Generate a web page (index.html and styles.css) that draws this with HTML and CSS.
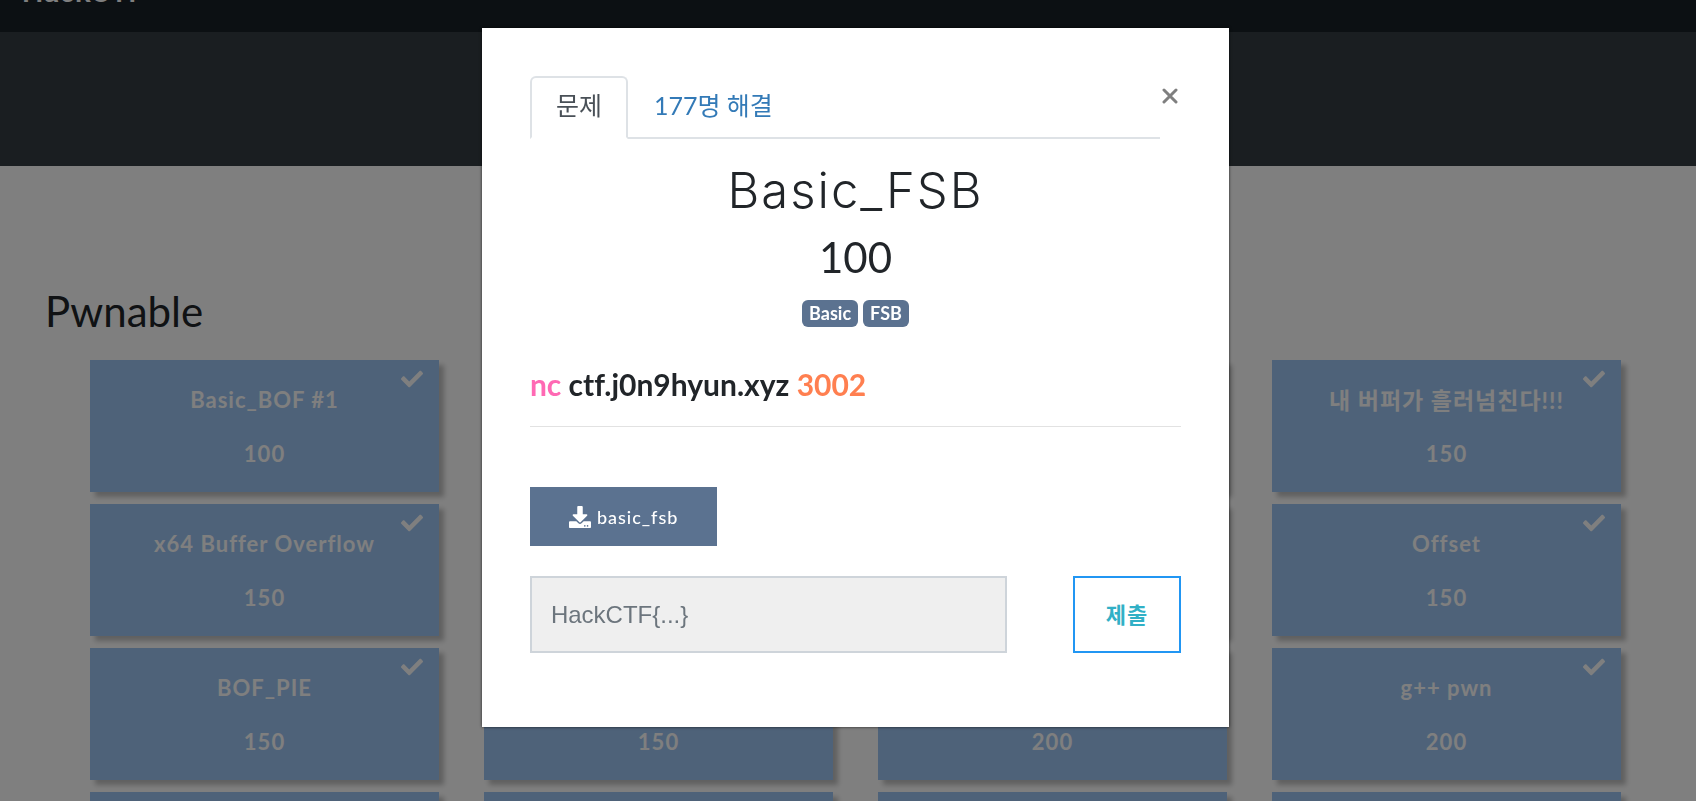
FILE: index.html
```html
<!DOCTYPE html>
<html lang="ko">
<head>
<meta charset="utf-8">
<title>HackCTF</title>
<link rel="stylesheet" href="styles.css">
</head>
<body>
<svg class="defs" aria-hidden="true">
  <symbol id="check" viewBox="0 0 512 512"><path fill="currentColor" d="M173.898 439.404l-166.400-166.400c-9.997-9.997-9.997-26.206 0-36.204l36.203-36.204c9.997-9.998 26.207-9.998 36.204 0L192 312.690 432.095 72.596c9.997-9.997 26.207-9.997 36.204 0l36.203 36.204c9.997 9.997 9.997 26.206 0 36.204l-294.400 294.401c-9.998 9.997-26.207 9.997-36.204-.001z"/></symbol>
  <symbol id="download" viewBox="0 0 512 512"><path fill="currentColor" d="M216 0h80c13.300 0 24 10.700 24 24v168h87.700c17.800 0 26.700 21.500 14.100 34.100L269.700 378.300c-7.500 7.500-19.800 7.500-27.300 0L90.100 226.100c-12.600-12.600-3.700-34.100 14.100-34.100H192V24c0-13.300 10.700-24 24-24zm296 376v112c0 13.300-10.700 24-24 24H24c-13.300 0-24-10.700-24-24V376c0-13.300 10.700-24 24-24h146.700l49 49c20.100 20.100 52.500 20.100 72.600 0l49-49H488c13.300 0 24 10.700 24 24zm-124 88c0-11-9-20-20-20s-20 9-20 20 9 20 20 20 20-9 20-20zm64 0c0-11-9-20-20-20s-20 9-20 20 9 20 20 20 20-9 20-20z"/></symbol>
</svg>
<div class="page">
  <nav class="navbar"><a class="brand" href="#">HackCTF</a></nav>
  <header class="hero"></header>
  <main class="board">
    <h3 class="category">Pwnable</h3>
    <div class="grid">
      <button class="card"><svg class="tick"><use href="#check"/></svg><span>Basic_BOF #1</span><span>100</span></button>
      <button class="card"></button>
      <button class="card"></button>
      <button class="card"><svg class="tick"><use href="#check"/></svg><span class="hangul">내 버퍼가 흘러넘친다!!!</span><span>150</span></button>
      <button class="card"><svg class="tick"><use href="#check"/></svg><span>x64 Buffer Overflow</span><span>150</span></button>
      <button class="card"></button>
      <button class="card"></button>
      <button class="card"><svg class="tick"><use href="#check"/></svg><span>Offset</span><span>150</span></button>
      <button class="card"><svg class="tick"><use href="#check"/></svg><span>BOF_PIE</span><span>150</span></button>
      <button class="card"><span class="name"></span><span>150</span></button>
      <button class="card"><span class="name"></span><span>200</span></button>
      <button class="card"><svg class="tick"><use href="#check"/></svg><span>g++ pwn</span><span>200</span></button>
      <button class="card"></button>
      <button class="card"></button>
      <button class="card"></button>
      <button class="card"></button>
    </div>
  </main>
</div>
<div class="backdrop">
  <section class="modal" role="dialog" aria-labelledby="title">
    <div class="top">
      <div class="tabs">
        <a class="tab active" href="#">문제</a>
        <a class="tab" href="#">177명 해결</a>
      </div>
      <button class="close" aria-label="닫기"><svg viewBox="0 0 16 16"><path d="M2 2l12 12M14 2L2 14" stroke="currentColor" stroke-width="3" stroke-linecap="round"/></svg></button>
    </div>
    <h3 class="title" id="title">Basic_FSB</h3>
    <h4 class="score">100</h4>
    <div class="tags"><span class="tag">Basic</span><span class="tag">FSB</span></div>
    <p class="server"><span class="cmd">nc</span> ctf.j0n9hyun.xyz <span class="port">3002</span></p>
    <a class="file" href="#"><svg><use href="#download"/></svg>basic_fsb</a>
    <form class="answer">
      <input class="flag" type="text" placeholder="HackCTF{...}" aria-label="Flag">
      <button class="submit" type="button">제출</button>
    </form>
  </section>
</div>
</body>
</html>
```

FILE: styles.css
```css
* { box-sizing: border-box; }
body {
  margin: 0;
  height: 100vh;
  overflow: hidden;
  background: #fff;
  color: #212529;
  font-family: Lato, "Noto Sans CJK KR", sans-serif;
}
h3, h4, p { margin: 0; font-weight: 400; }
a { text-decoration: none; }
button { font-family: inherit; cursor: pointer; }
.defs { position: absolute; width: 0; height: 0; }
.page { height: 100vh; overflow: hidden; }

.navbar {
  display: flex;
  align-items: center;
  height: 80px;
  margin-top: -48px;
  padding: 0 22px;
  background: #182026;
}
.brand {
  color: #fff;
  font: 500 30px/80px Roboto, sans-serif;
}
.hero { height: 134px; background: #343c42; }

.board { padding: 120px 75px 0 45px; }
.category { font-size: 42px; line-height: 50px; }
.grid {
  display: grid;
  grid-template-columns: repeat(4, 1fr);
  gap: 12px 45px;
  margin-top: 24px;
  padding-left: 45px;
}
.card {
  position: relative;
  display: flex;
  flex-direction: column;
  align-items: center;
  gap: 28px;
  height: 132px;
  padding: 27px 16px 25px;
  border: 0;
  background: #9dc5f3;
  color: #fff;
  font-size: 22px;
  font-weight: 700;
  line-height: 26px;
  letter-spacing: 1px;
  box-shadow: 5px 5px 5px rgba(0, 0, 0, .25);
}
.name { height: 26px; }
.hangul { font-size: 23px; }
.tick { position: absolute; top: 8px; right: 16px; width: 22px; height: 22px; }

.backdrop {
  position: fixed;
  inset: 0;
  padding: 28px 0;
  background: rgba(0, 0, 0, .5);
}
.modal {
  width: calc(44% + 1px);
  margin-left: calc(28% + 7px);
  padding: 48px 48px 74px;
  background: #fff;
  box-shadow: 0 0 3px rgba(0, 0, 0, .7);
}
.top { display: flex; align-items: flex-start; }
.tabs { display: flex; flex: 1; border-bottom: 2px solid #dee2e6; }
.tab {
  margin-bottom: -2px;
  padding: 10px 24px 14px;
  border: 2px solid transparent;
  border-radius: 6px 6px 0 0;
  color: #337ab7;
  font-size: 25px;
  line-height: 35px;
}
.tab.active { color: #495057; background: #fff; border-color: #dee2e6 #dee2e6 #fff; }
.close { padding: 12px 3px 12px 2px; border: 0; background: none; color: #7f7f7f; }
.close svg { display: block; width: 16px; height: 16px; }
.title {
  margin-top: 22px;
  text-align: center;
  font-family: Inter, sans-serif;
  font-size: 49px;
  font-weight: 300;
  line-height: 60px;
  letter-spacing: 2px;
}
.score { margin-top: 10px; text-align: center; font-size: 42px; line-height: 52px; }
.tags { display: flex; justify-content: center; gap: 5px; margin-top: 17px; }
.tag {
  padding: 4px 7px;
  border-radius: 6px;
  background: #5b7290;
  color: #fff;
  font-size: 18px;
  font-weight: 700;
  line-height: 19px;
}
.server {
  margin-top: 37px;
  padding-bottom: 22px;
  border-bottom: 1px solid #e2e2e2;
  font-size: 30px;
  font-weight: 700;
  line-height: 40px;
  font-variant-ligatures: none;
}
.cmd { color: #ff69b4; }
.port { color: #ff7f50; }
.file {
  display: flex;
  width: fit-content;
  align-items: center;
  gap: 6px;
  height: 59px;
  margin-top: 60px;
  padding: 0 39px;
  background: #5b7290;
  color: #fff;
  font-size: 18px;
  font-weight: 500;
  letter-spacing: 1px;
}
.file svg { width: 22px; height: 22px; }
.answer { display: flex; justify-content: space-between; margin-top: 30px; }
.flag {
  width: 477px;
  height: 77px;
  padding: 0 19px;
  border: 2px solid #ced4da;
  background: #efefef;
  font: 24px "Liberation Sans", sans-serif;
}
.flag::placeholder { color: #6c757d; }
.submit {
  width: 108px;
  padding: 0 0 4px;
  border: 2px solid #2196f3;
  background: #fff;
  color: #31b0c6;
  font-size: 22px;
  font-weight: 700;
  letter-spacing: 1px;
}
```
